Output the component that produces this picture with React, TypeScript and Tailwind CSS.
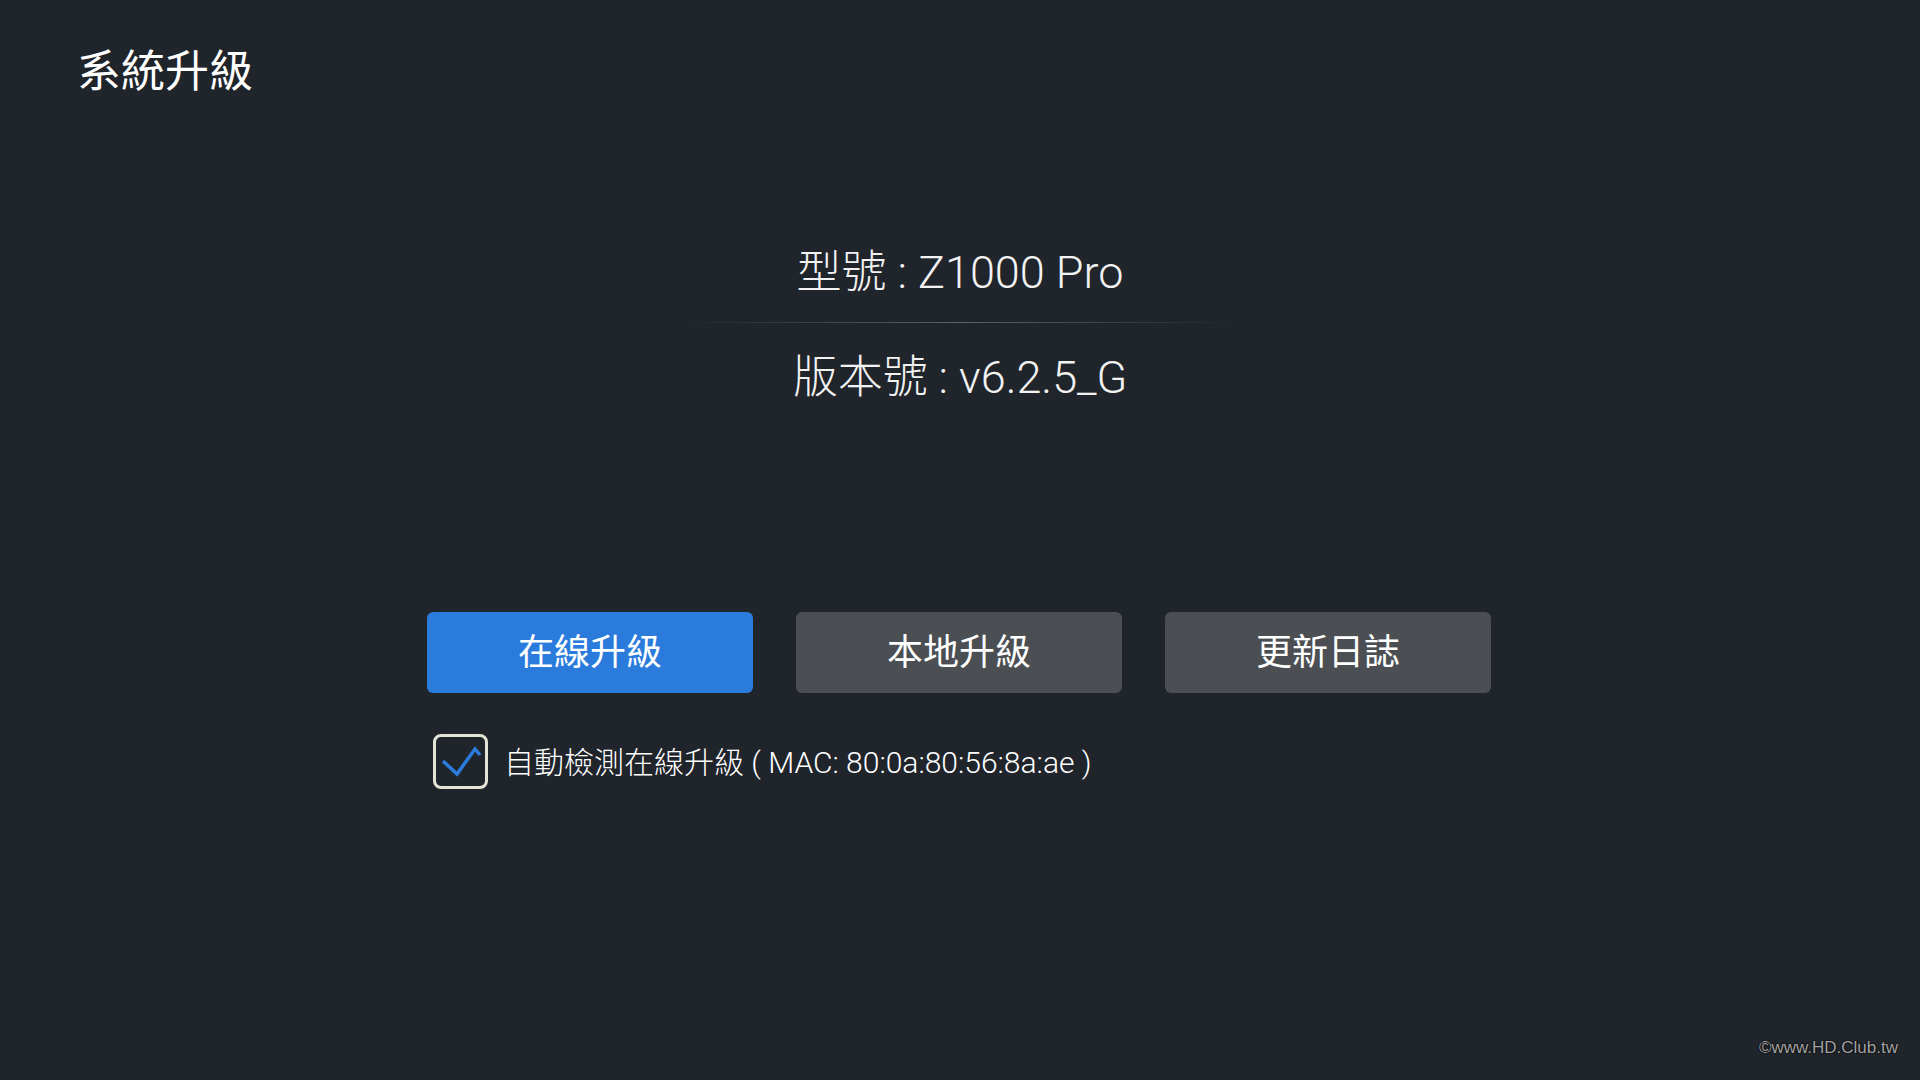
const font = { fontFamily: "Roboto, 'Noto Sans CJK TC', sans-serif" };

const CheckBox = () => (
  <div className="w-[55px] h-[55px] rounded-[8px] border-[3px] border-[#e4e4d6] flex-none">
    <svg viewBox="0 0 49 49" className="w-full h-full">
      <polyline
        points="7,24 21,37 39,12 44,18"
        fill="none"
        stroke="#2a7bdc"
        strokeWidth="3.5"
        strokeLinejoin="miter"
        strokeLinecap="butt"
      />
    </svg>
  </div>
);

const App = () => {
  const buttons = [
    { label: "在線升級", active: true },
    { label: "本地升級", active: false },
    { label: "更新日誌", active: false },
  ];

  return (
    <div className="relative w-[1920px] h-[1080px] bg-[#20242b] text-white overflow-hidden" style={font}>
      <h1 className="pt-[50px] pl-[77px] text-[44px] leading-none font-normal">系統升級</h1>

      <div className="mt-[156px] flex flex-col items-center font-light text-[#f2f2f2]">
        <div className="text-[45px] leading-none">型號 : Z1000 Pro</div>
        <div className="mt-[27px] w-[564px] h-px bg-linear-to-r from-transparent via-[#5e625f] to-transparent"></div>
        <div className="mt-[32px] text-[45px] leading-none">版本號 : v6.2.5_G</div>
      </div>

      <div className="mt-[212px] mx-auto w-[1066px]">
        <div className="flex gap-[43px]">
          {buttons.map((b) => (
            <button
              key={b.label}
              className={
                b.active
                  ? "w-[326px] h-[81px] rounded-[6px] bg-[#2a7bdc] text-[36px] leading-none text-white"
                  : "w-[326px] h-[81px] rounded-[6px] bg-[#4b4f53] text-[36px] leading-none text-white"
              }
            >
              {b.label}
            </button>
          ))}
        </div>

        <div className="mt-[41px] pl-[6px] flex items-center gap-[16px]">
          <CheckBox />
          <span className="pt-[3px] text-[30px] leading-none font-light">
            自動檢測在線升級 ( MAC: 80:0a:80:56:8a:ae )
          </span>
        </div>
      </div>

      <div
        className="absolute right-[22px] bottom-[24px] text-[17px] leading-none text-[#a3a3a3]"
        style={{ fontFamily: "'Liberation Sans', sans-serif", textShadow: "0 0 2px #000, 0 0 1px #000" }}
      >
        ©www.HD.Club.tw
      </div>
    </div>
  );
};

export default App;
